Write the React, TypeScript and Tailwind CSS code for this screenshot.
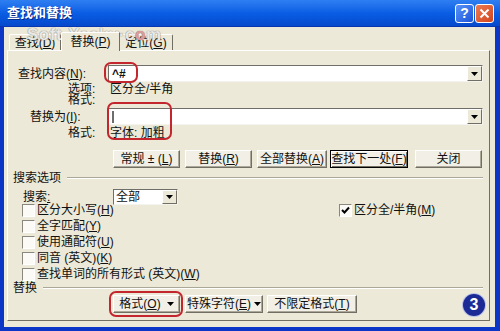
import React from "react";

const Acc: React.FC<{ k: string }> = ({ k }) => (
  <>
    (<u>{k}</u>)
  </>
);

const Arrow: React.FC = () => (
  <svg width="7" height="4" viewBox="0 0 7 4">
    <path d="M0 0h7L3.5 4z" fill="#000" />
  </svg>
);

const DropBtn: React.FC = () => (
  <div className="flex w-[15px] h-full items-center justify-center bg-[#ece9d8] border border-t-white border-l-white border-r-[#716f64] border-b-[#716f64]">
    <Arrow />
  </div>
);

const Combo: React.FC<{ children?: React.ReactNode; className?: string }> = ({ children, className }) => (
  <div
    className={`flex h-[17px] bg-white border border-t-[#6f6e68] border-l-[#6f6e68] border-r-[#f4f3ee] border-b-[#f4f3ee] ${className ?? ""}`}
  >
    <div className="flex flex-1 items-center pl-[3px]">{children}</div>
    <DropBtn />
  </div>
);

const Btn: React.FC<{ className: string; children: React.ReactNode; def?: boolean }> = ({ className, children, def }) => (
  <div
    className={`flex h-full items-center justify-center bg-[#f1efe6] border ${
      def
        ? "border-black shadow-[inset_1px_1px_0_#fff,inset_-1px_-1px_0_#716f64]"
        : "border-t-white border-l-white border-r-[#716f64] border-b-[#716f64] shadow-[inset_-1px_-1px_0_#aca899]"
    } ${className}`}
  >
    {children}
  </div>
);

const Check: React.FC<{ checked?: boolean }> = ({ checked }) => (
  <div className="flex w-[13px] h-[13px] items-center justify-center bg-[#fbfaf6] border border-t-[#8a877d] border-l-[#8a877d] border-r-white border-b-white">
    {checked ? (
      <svg width="9" height="9" viewBox="0 0 9 9">
        <path d="M1 4l2.5 2.5L8 1.5" stroke="#000" strokeWidth="2" fill="none" />
      </svg>
    ) : null}
  </div>
);

const options = [
  { label: "区分大小写", k: "H" },
  { label: "全字匹配", k: "Y" },
  { label: "使用通配符", k: "U" },
  { label: "同音 (英文)", k: "K" },
  { label: "查找单词的所有形式 (英文)", k: "W" },
];

export default function App() {
  return (
    <div className="relative flex flex-col w-[500px] h-[331px] overflow-hidden whitespace-nowrap bg-[#0b36c6] text-[12px] leading-[12px] text-[#111] font-['Liberation_Sans','Noto_Sans_CJK_SC',sans-serif]">
      {/* title bar */}
      <div className="flex h-[27px] items-center bg-linear-to-b from-[#2f7ff2] via-[#0a5ee4] to-[#0649cc] border-b border-b-[#0837b0]">
        <span className="pl-[7px] text-[13px] font-bold text-white [text-shadow:1px_1px_0_#0a2a8a]">查找和替换</span>
        <div className="ml-auto mr-[6px] flex gap-[1px]">
          <div className="flex w-[19px] h-[19px] items-center justify-center rounded-[3px] border border-white bg-linear-to-br from-[#5a93f8] to-[#1c53d8] text-[14px] font-bold text-white">
            ?
          </div>
          <div className="flex w-[19px] h-[19px] items-center justify-center rounded-[3px] border border-white bg-linear-to-br from-[#ec7a52] to-[#d24418]">
            <svg width="11" height="11" viewBox="0 0 11 11">
              <path d="M1.5 1.5l8 8M9.5 1.5l-8 8" stroke="#fff" strokeWidth="2" />
            </svg>
          </div>
        </div>
      </div>

      {/* body */}
      <div className="flex flex-1 flex-col ml-[4px] mr-[5px] mb-[4px] bg-[#ece9d8] pl-[3px] pr-[5px] pt-[5px] pb-[6px]">
        {/* tabs */}
        <div className="flex h-[18px] items-end ml-[2px]">
          <div className="flex w-[52px] h-[16px] items-center justify-center border-t border-l border-r border-t-white border-l-white border-r-[#716f64] rounded-tl-[2px]">
            查找<Acc k="D" />
          </div>
          <div className="relative z-10 -mb-px flex w-[59px] h-[19px] items-center justify-center bg-[#ece9d8] border-t border-l border-r border-t-white border-l-white border-r-[#716f64] rounded-tl-[2px]">
            替换<Acc k="P" />
          </div>
          <div className="flex w-[53px] h-[16px] items-center justify-center border-t border-r border-t-white border-r-[#716f64] rounded-tr-[2px]">
            定位<Acc k="G" />
          </div>
        </div>

        {/* panel */}
        <div className="flex flex-1 flex-col border border-t-white border-l-white border-r-[#716f64] border-b-[#716f64] pl-[5px] pr-[6px] pt-[14px]">
          <div className="flex h-[17px] items-center">
            <span className="ml-[5px] w-[90px]">
              查找内容<Acc k="N" />:
            </span>
            <Combo className="flex-1">
              <span className="font-bold">^#</span>
            </Combo>
          </div>
          <div className="mt-[1px] flex h-[11px] items-center">
            <span className="ml-[55px] w-[42px]">选项:</span>
            <span>区分全/半角</span>
          </div>
          <div className="flex h-[11px] items-center">
            <span className="ml-[55px] w-[42px]">格式:</span>
          </div>
          <div className="mt-[3px] flex h-[17px] items-center">
            <span className="ml-[17px] w-[78px]">
              替换为<Acc k="I" />:
            </span>
            <Combo className="flex-1">
              <div className="w-[2px] h-[12px] bg-[#6d6d6d]" />
            </Combo>
          </div>
          <div className="mt-[2px] flex h-[12px] items-center">
            <span className="ml-[55px] w-[42px]">格式:</span>
            <span>字体: 加粗</span>
          </div>

          <div className="mt-[11px] flex h-[18px] ml-[100px] gap-[5px]">
            <Btn className="w-[67px]">
              常规 ± <Acc k="L" />
            </Btn>
            <Btn className="w-[67px]">
              替换<Acc k="R" />
            </Btn>
            <Btn className="w-[70px]">
              全部替换<Acc k="A" />
            </Btn>
            <Btn className="w-[78px] -ml-[2px]" def>
              查找下一处<Acc k="F" />
            </Btn>
            <Btn className="w-[67px] ml-[2px]">关闭</Btn>
          </div>

          <div className="mt-[4px] flex h-[12px] items-center">
            <span>搜索选项</span>
            <div className="ml-[6px] flex-1 h-[2px] border-t border-b border-t-[#aca899] border-b-white" />
          </div>
          <div className="mt-[5px] flex h-[16px] items-center">
            <span className="ml-[10px] w-[90px]">
              搜索<u>:</u>
            </span>
            <div className="flex w-[65px] h-full bg-white border border-t-[#6f6e68] border-l-[#6f6e68] border-r-[#f4f3ee] border-b-[#f4f3ee]">
              <div className="flex flex-1 items-center pl-[2px]">全部</div>
              <DropBtn />
            </div>
          </div>

          <div className="-mt-[3px] flex flex-col">
            {options.map(({ label, k }, i) => (
              <div key={k} className="flex h-[16px] items-center">
                <div className="ml-[9px] flex w-[317px] items-center gap-[2px]">
                  <Check />
                  <span>
                    {label}
                    <Acc k={k} />
                  </span>
                </div>
                {i === 0 ? (
                  <div className="flex items-center gap-[2px]">
                    <Check checked />
                    <span>
                      区分全/半角<Acc k="M" />
                    </span>
                  </div>
                ) : null}
              </div>
            ))}
          </div>

          <div className="flex h-[12px] items-center">
            <span>替换</span>
            <div className="ml-[6px] flex-1 h-[2px] border-t border-b border-t-[#aca899] border-b-white" />
          </div>
          <div className="mt-[1px] flex h-[18px] ml-[100px] gap-[5px]">
            <Btn className="w-[67px] gap-[6px]">
              <span>
                格式<Acc k="O" />
              </span>
              <Arrow />
            </Btn>
            <Btn className="w-[78px] gap-[3px]">
              <span>
                特殊字符<Acc k="E" />
              </span>
              <Arrow />
            </Btn>
            <Btn className="w-[90px] -ml-[1px]">
              不限定格式<Acc k="T" />
            </Btn>
          </div>
        </div>
      </div>

      {/* watermark */}
      <span className="pointer-events-none absolute left-[27px] top-[26px] text-[17px] leading-[17px] font-bold tracking-[0.5px] text-[#fbfaf6]/85 [text-shadow:0_0_1px_#8c8c8c,0_0_1px_#8c8c8c] font-['Liberation_Sans',sans-serif]">
        Soft·Yesky·c<span className="text-[#e09a9a]">o</span>m
      </span>

      {/* annotations */}
      <div className="pointer-events-none absolute left-[104px] top-[62px] w-[34px] h-[21px] rounded-[7px] border-2 border-[#c3262c]" />
      <div className="pointer-events-none absolute left-[107px] top-[102px] w-[65px] h-[38px] rounded-[7px] border-2 border-[#c3262c]" />
      <div className="pointer-events-none absolute left-[109px] top-[291px] w-[74px] h-[26px] rounded-[7px] border-2 border-[#c3262c]" />
      <div className="absolute left-[463px] top-[294px] flex w-[22px] h-[22px] items-center justify-center rounded-full bg-[#1b2a95] ring-1 ring-[#b9c0e8] text-[16px] font-bold text-white font-['Liberation_Sans',sans-serif]">
        3
      </div>
    </div>
  );
}
